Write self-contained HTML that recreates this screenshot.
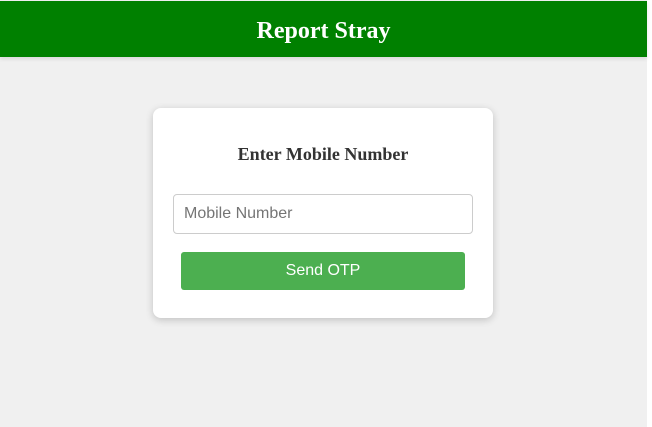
<!DOCTYPE html>
<html><head><style>
body{margin:0;width:652px;height:427px;background:#fff;position:relative;overflow:hidden;font-family:"Liberation Serif",serif}
.bg{position:absolute;left:0;top:0;width:647px;height:427px;background:#f0f0f0}
.hd{position:absolute;left:0;top:1px;width:647px;height:56px;background:#008000;color:#fff;font-weight:bold;font-size:24px;text-align:center;line-height:60px;box-shadow:0 2px 4px rgba(0,0,0,.1)}
.card{position:absolute;left:153px;top:108px;width:340px;height:210px;background:#fff;border-radius:8px;box-shadow:0 2px 8px rgba(0,0,0,.2)}
.t{position:absolute;width:340px;top:144px;text-align:center;font-weight:bold;font-size:18px;color:#333}
.in{position:absolute;left:173px;top:194px;border:1px solid #ccc;border-radius:4px;background:#fff;font-family:"Liberation Sans",sans-serif;font-size:16px;color:#757575;line-height:38px;padding-left:10px;box-sizing:border-box;width:300px;height:40px}
.bt{position:absolute;left:181px;top:252px;width:284px;height:38px;background:#4caf50;border-radius:3px;color:#fff;font-family:"Liberation Sans",sans-serif;font-size:16px;text-align:center;line-height:38px}
</style></head><body>
<div class="bg"></div>
<div class="hd">Report Stray</div>
<div class="card"></div>
<div class="t" style="left:153px">Enter Mobile Number</div>
<div class="in">Mobile Number</div>
<div class="bt">Send OTP</div>
</body></html>
